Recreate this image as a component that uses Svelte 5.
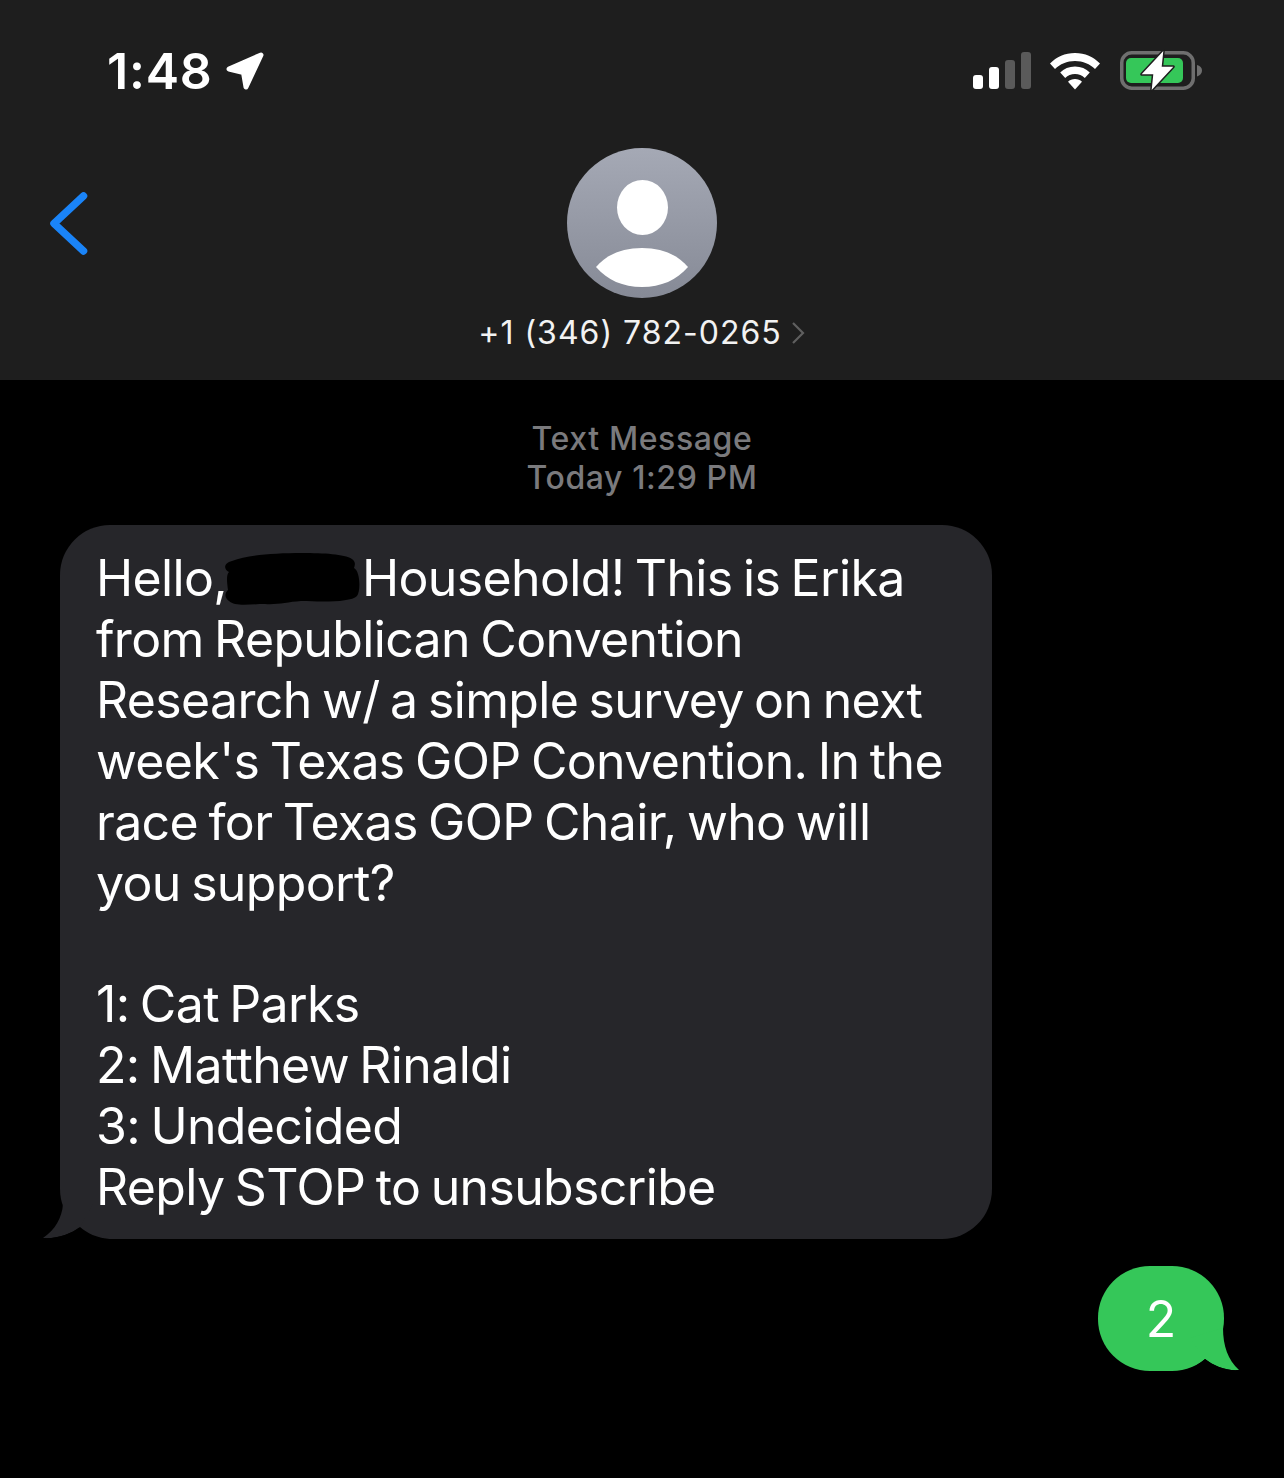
<script>
  const lines = [
    "from Republican Convention",
    "Research w/ a simple survey on next",
    "week's Texas GOP Convention. In the",
    "race for Texas GOP Chair, who will",
    "you support?",
    "",
    "1: Cat Parks",
    "2: Matthew Rinaldi",
    "3: Undecided",
    "Reply STOP to unsubscribe",
  ];
</script>

<div class="screen">
  <header>
    <div class="status">
      <div class="clock">
        <span>1:48</span>
        <svg width="42" height="42" viewBox="0 0 42 42">
          <path d="M4 19 36 5 21 37 18.500 22.500z" fill="#fff" stroke="#fff" stroke-width="5" stroke-linejoin="round" />
        </svg>
      </div>
      <div class="indicators">
        <svg class="signal" width="58" height="38" viewBox="0 0 58 38">
          <rect x="0" y="23" width="10" height="14" rx="3" fill="#fff" />
          <rect x="16" y="15" width="10" height="22" rx="3" fill="#fff" />
          <rect x="32" y="8" width="10" height="29" rx="3" fill="#5a5a5a" />
          <rect x="48" y="0" width="10" height="37" rx="3" fill="#5a5a5a" />
        </svg>
        <svg class="wifi" width="52" height="38" viewBox="0 0 52 38">
          <path d="M26 1C16 1 7.500 5 1 11.500l5 5.500C11 12 18 9 26 9s15 3 20 8l5-5.500C44.500 5 36 1 26 1z" fill="#fff" />
          <path d="M26 14.500c-6 0-11 2.300-14.800 6l5 5.500c2.600-2.500 6-4 9.800-4s7.200 1.500 9.800 4l5-5.500c-3.800-3.700-8.800-6-14.800-6z" fill="#fff" />
          <path d="M26 27c-2.800 0-5.200 1-7 2.800L26 37.500l7-7.700C31.200 28 28.800 27 26 27z" fill="#fff" />
        </svg>
        <svg class="battery" width="84" height="44" viewBox="0 0 84 44">
          <rect x="2.750" y="3.750" width="71.500" height="35.500" rx="10" fill="none" stroke="#6f6f6f" stroke-width="3.500" />
          <rect x="7" y="9" width="57" height="25" rx="5" fill="#35c759" />
          <path d="M78 16c3 .8 5 2.500 5 5.500s-2 5-5 6z" fill="#6f6f6f" />
          <path d="M44.300 2 22.700 25.300h11.600L32.700 41l21.600-23.300H42.700z" fill="#fff" stroke="#1e1e1e" stroke-width="3" stroke-linejoin="round" paint-order="stroke" />
        </svg>
      </div>
    </div>

    <div class="contact">
      <svg class="back" width="40" height="66" viewBox="0 0 40 66">
        <path d="M35.500 6 6 33.500 35.500 61" fill="none" stroke="#1a84f8" stroke-width="7.500" stroke-linecap="round" stroke-linejoin="round" />
      </svg>
      <div class="person">
        <svg width="150" height="150" viewBox="0 0 150 150">
          <defs>
            <linearGradient id="avatar" x1="0" y1="0" x2="0" y2="1">
              <stop offset="0" stop-color="#a5a9b5" />
              <stop offset="1" stop-color="#868a96" />
            </linearGradient>
          </defs>
          <circle cx="75" cy="75" r="75" fill="url(#avatar)" />
          <ellipse cx="75.500" cy="59.500" rx="25.500" ry="27.500" fill="#fff" />
          <path d="M29 119c10-12 26-19 46-19s36 7 46 19c-11 13-27 20-46 20s-35-7-46-20z" fill="#fff" />
        </svg>
        <div class="number">
          <span>+1 (346) 782-0265</span>
          <svg width="16" height="24" viewBox="0 0 16 24">
            <path d="M3 2l10 10L3 22" fill="none" stroke="#5f5f5f" stroke-width="2.200" />
          </svg>
        </div>
      </div>
    </div>
  </header>

  <main>
    <div class="stamp">
      <div>Text Message</div>
      <div>Today 1:29 PM</div>
    </div>

    <div class="bubble in">
      <div class="line">Hello,<svg class="redact" width="138" height="54" viewBox="0 0 138 54"><path d="M8 8C24 2 50 0 78 0c22 0 42 1 50 6 4 3 3 6 2 9 6 3 7 22 3 28-6 6-30 6-56 5-14 1-24 4-36 3-14 0-30 3-36-3-4-3-5-7-1-11-1-8-2-15 1-18-6-3-5-9 3-11z" fill="#000" /></svg>Household! This is Erika</div>
      {#each lines as line}
        <div class="line">{line || "\u00a0"}</div>
      {/each}
      <svg class="tail" width="70" height="36" viewBox="0 0 70 36">
        <path d="M20 0C19 14 12 26 0 34 14 35 28 30 37 23L50 0z" fill="#26262a" />
        <path d="M0 34C14 35 28 30 37 23 44 29 54 34 66 35V36H0z" fill="#000" />
      </svg>
    </div>

    <div class="row-out">
      <div class="bubble out">
        <span class="digit">2</span>
        <svg class="tail" width="60" height="44" viewBox="0 0 60 44">
          <path d="M43 0C43 18 48 32 59 42 46 43 34 38 25 31L10 10z" fill="#35c759" />
          <path d="M59 42C46 43 34 38 25 31 18 37 10 42 0 43V44H59z" fill="#000" />
        </svg>
      </div>
    </div>
  </main>
</div>

<style>
  :global(body) {
    margin: 0;
    background: #000;
  }
  .screen {
    width: 1284px;
    height: 1478px;
    overflow: hidden;
    background: #000;
    color: #fff;
    font-family: "Inter", "Liberation Sans", sans-serif;
  }
  header {
    height: 380px;
    box-sizing: border-box;
    background: #1e1e1e;
    padding-top: 42px;
  }
  .status {
    display: flex;
    justify-content: space-between;
    align-items: center;
    height: 58px;
    padding: 0 81px 0 107px;
  }
  .clock {
    display: flex;
    align-items: center;
    gap: 12px;
    font-size: 50px;
    font-weight: 600;
    letter-spacing: 0.8px;
  }
  .indicators {
    display: flex;
    align-items: center;
    gap: 18px;
  }
  .contact {
    display: grid;
    grid-template-columns: 1fr auto 1fr;
    margin-top: 48px;
    padding: 0 48px;
  }
  .back {
    margin-top: 42px;
  }
  .person {
    display: flex;
    flex-direction: column;
    align-items: center;
  }
  .person > svg {
    display: block;
  }
  .number {
    display: flex;
    align-items: center;
    gap: 8px;
    margin-top: 16px;
    font-size: 32px;
    line-height: 38px;
    color: #f2f2f2;
    letter-spacing: 1px;
  }
  main {
    padding-top: 39px;
  }
  .stamp {
    text-align: center;
    color: #7a7a7d;
    font-size: 32px;
    font-weight: 500;
    line-height: 39px;
    letter-spacing: 0.6px;
  }
  .bubble {
    position: relative;
    box-sizing: border-box;
    font-size: 50px;
    line-height: 60.900px;
  }
  .in {
    width: 932px;
    height: 714px;
    margin: 28px 0 0 60px;
    padding: 23px 20px 0 36px;
    background: #26262a;
    border-radius: 50px;
    letter-spacing: -0.650px;
    word-spacing: -3px;
  }
  .line {
    white-space: nowrap;
  }
  .redact {
    vertical-align: -11px;
    margin: 0 0 0 -3px;
  }
  .in .tail {
    position: absolute;
    left: -17px;
    bottom: -1px;
  }
  .row-out {
    display: flex;
    justify-content: flex-end;
    padding: 27px 60px 0 0;
  }
  .out {
    width: 126px;
    height: 105px;
    display: flex;
    align-items: center;
    justify-content: center;
    background: #35c759;
    border-radius: 52px;
  }
  .digit {
    margin-top: 2px;
  }
  .out .tail {
    position: absolute;
    right: -16px;
    bottom: -1px;
  }
</style>
